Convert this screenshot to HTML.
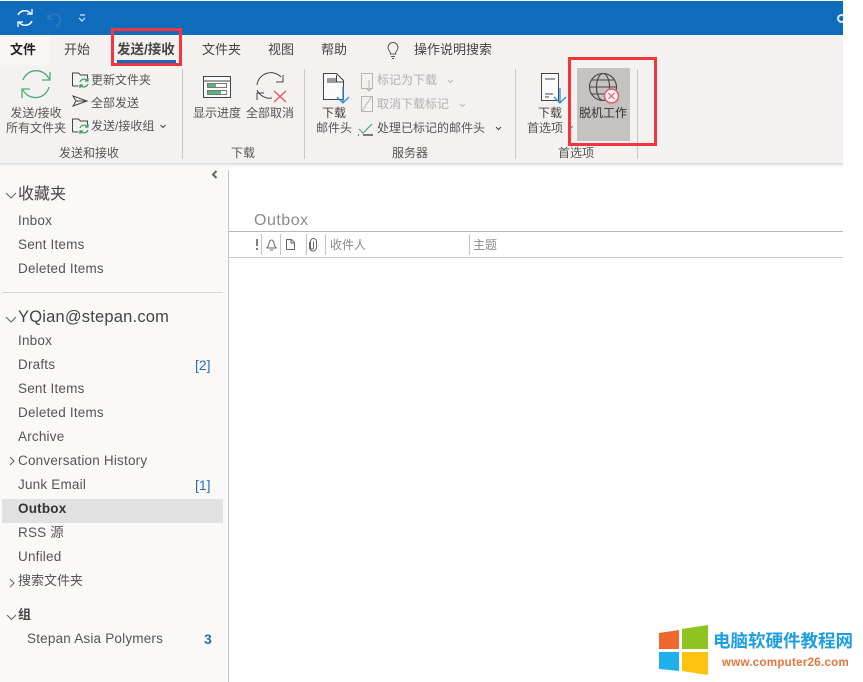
<!DOCTYPE html>
<html><head><meta charset="utf-8"><style>
html,body{margin:0;padding:0;background:#fff}
#p{position:relative;width:863px;height:682px;overflow:hidden;background:#fff;font-family:"Liberation Sans","Noto Sans CJK SC",sans-serif;color:#444}
.t{position:absolute;white-space:nowrap;font-size:12px;line-height:16px;color:#444}
.c{transform:translateX(-50%)}
.r{position:absolute}
.n{font-size:13.5px;letter-spacing:.2px;color:#555}
svg{position:absolute;overflow:visible}
</style></head><body><div id="p">
<div class="r" style="left:0;top:1px;width:843px;height:34px;background:#0f6cbd"></div>
<div class="r" style="left:0;top:35px;width:843px;height:128px;background:#f3f2f1"></div>
<div class="r" style="left:0;top:163px;width:843px;height:5px;background:linear-gradient(#d8d8d8,#f4f4f4 50%,#fff)"></div>
<div class="r" style="left:0;top:166px;width:228px;height:516px;background:#faf9f8"></div>
<div class="r" style="left:228px;top:170px;width:1px;height:512px;background:#c8c8c8"></div>
<div class="r" style="left:0;top:35px;width:50px;height:30px;background:#f7f6f5"></div>

<svg style="left:0;top:0" width="120" height="35" fill="none">
<path d="M18 15a7.500 7.500 0 0 1 13-1M32 21a7.500 7.500 0 0 1-13 1" stroke="#fff" stroke-width="1.500"/>
<path d="M32 9v5h-5M18 27v-5h5" stroke="#fff" stroke-width="1.300"/>
<path d="M48 14v5h5M48 19c3-6 10-6 12-1 1 4-1 7-4 9" stroke="#2f78bd" stroke-width="1.400"/>
<path d="M80 15h5M79 18l3 3 3-3" stroke="#dce9f6" stroke-width="1.200"/>
</svg>
<div class="r" style="left:837px;top:13px;width:6px;height:11px;overflow:hidden"><div style="width:9px;height:9px;border:2px solid #dfeaf5;border-radius:50%;box-sizing:border-box;margin-top:1px"></div></div>

<div class="t" style="left:10px;top:42px;font-weight:700;color:#222;font-size:13px">文件</div>
<div class="t" style="left:64px;top:42px;font-size:13px">开始</div>
<div class="t" style="left:117px;top:42px;font-weight:700;font-size:13.500px;color:#444">发送/接收</div>
<div class="r" style="left:117px;top:60px;width:59px;height:3px;background:#0f6cbd"></div>
<div class="t" style="left:202px;top:42px;font-size:13px">文件夹</div>
<div class="t" style="left:268px;top:42px;font-size:13px">视图</div>
<div class="t" style="left:321px;top:42px;font-size:13px">帮助</div>
<svg style="left:385px;top:42px" width="16" height="18" fill="none" stroke="#555"><path d="M5.500 12c0-3-2.500-3.500-2.500-6.500a5 5 0 0 1 10 0c0 3-2.500 3.500-2.500 6.500zM6 14.500h4M7 16.500h2"/></svg>
<div class="t" style="left:414px;top:42px;font-size:13px">操作说明搜索</div>

<svg style="left:0;top:66px" width="170" height="70" fill="none">
<path d="M23 14a14 14 0 0 1 26-1M49 21a14 14 0 0 1-26 3" stroke="#4aab72" stroke-width="1.300"/>
<path d="M50 6v8h-8M22 32v-9h8" stroke="#4aab72" stroke-width="1.300"/>
<path d="M72.500 20V7h6l2 2h7v4M72.500 20h6" stroke="#444"/>
<path d="M80 16a4.500 4.500 0 0 1 7.500-1.500M88 18a4.500 4.500 0 0 1-7.500 1.500M88 12v3h-3M80 22v-3h3" stroke="#3a9a5e" stroke-width="1.200"/>
<path d="M73 30l14 5-14 5 3-5zM76 35h11" stroke="#444"/>
<path d="M72.500 66V53h6l2 2h7v4M72.500 66h6" stroke="#444"/>
<path d="M80 62a4.500 4.500 0 0 1 7.500-1.500M88 64a4.500 4.500 0 0 1-7.500 1.500M88 58v3h-3M80 68v-3h3" stroke="#3a9a5e" stroke-width="1.200"/>
<path d="M160.500 59l2.500 2.500 2.500-2.500" stroke="#444"/>
</svg>
<div class="t c" style="left:36px;top:105px;color:#555">发送/接收</div>
<div class="t c" style="left:36px;top:120px;color:#555">所有文件夹</div>
<div class="t" style="left:91px;top:72px;color:#555">更新文件夹</div>
<div class="t" style="left:91px;top:95px;color:#555">全部发送</div>
<div class="t" style="left:91px;top:118px;color:#555">发送/接收组</div>
<div class="t c" style="left:89px;top:145px;color:#555">发送和接收</div>
<div class="r" style="left:182px;top:69px;width:1px;height:90px;background:#c9c8c7"></div>

<svg style="left:190px;top:70px" width="110" height="36" fill="none">
<rect x="13.500" y="6.500" width="27" height="21" fill="#fafafa" stroke="#444"/><path d="M14 11h26" stroke="#444"/>
<rect x="17.500" y="13.500" width="19" height="4" fill="#fff" stroke="#777"/><rect x="18" y="14" width="8" height="3" fill="#59b27d"/>
<rect x="17.500" y="20.500" width="19" height="4" fill="#fff" stroke="#777"/><rect x="18" y="21" width="13" height="3" fill="#59b27d"/>
<path d="M67 15a14 14 0 0 1 24-8M82 28a14 14 0 0 1-15-8" stroke="#444"/>
<path d="M93 5v7h-7M67 30v-7h7" stroke="#444"/>
<path d="M84 21l12 11M96 21L84 32" stroke="#e8504f" stroke-width="1.200"/>
</svg>
<div class="t c" style="left:217px;top:105px;color:#555">显示进度</div>
<div class="t c" style="left:270px;top:105px;color:#555">全部取消</div>
<div class="t c" style="left:243px;top:145px;color:#555">下载</div>
<div class="r" style="left:304px;top:69px;width:1px;height:90px;background:#c9c8c7"></div>

<svg style="left:318px;top:70px" width="50" height="36" fill="none">
<path d="M5.500 3.500h13l7 7v19h-20z" fill="#fbfbfb" stroke="#444"/><path d="M18.500 5v7h7" stroke="#444"/><rect x="9" y="8" width="9" height="5" fill="#999"/>
<path d="M25 17v16M19 27l6 6 6-6" stroke="#2f8fd0" stroke-width="1.300"/>
</svg>
<div class="t c" style="left:334px;top:105px;color:#444">下载</div>
<div class="t c" style="left:334px;top:120px;color:#555">邮件头</div>
<svg style="left:355px;top:70px" width="130" height="70" fill="none">
<path d="M6.500 3.500h11v15h-11z" stroke="#b5b5b5"/><path d="M14 10v11M10.500 18l3.500 3 3.500-3" stroke="#b5b5b5"/>
<path d="M6.500 26.500h11v15h-11zM7 41l10-15" stroke="#b5b5b5"/>
<path d="M4 59l4 4 9-9" stroke="#4aab72" stroke-width="1.200"/><path d="M3 65h1M8 65h10" stroke="#333" stroke-width="1.200"/>
<path d="M93 10l2.500 2.500 2.500-2.500M105 34l2.500 2.500 2.500-2.500" stroke="#bbb"/>
</svg>
<div class="t" style="left:377px;top:72px;color:#b0b0b0">标记为下载</div>
<div class="t" style="left:377px;top:96px;color:#b0b0b0">取消下载标记</div>
<div class="t" style="left:377px;top:120px;color:#555">处理已标记的邮件头</div>
<svg style="left:495px;top:126px" width="12" height="8" fill="none"><path d="M1 1l2.500 2.500L6 1" stroke="#444"/></svg>
<div class="t c" style="left:410px;top:145px;color:#555">服务器</div>
<div class="r" style="left:515px;top:69px;width:1px;height:90px;background:#c9c8c7"></div>

<svg style="left:536px;top:70px" width="32" height="36" fill="none">
<path d="M5.500 3.500h17v27h-17z" fill="#fbfbfb" stroke="#444"/><path d="M9 9h10M9 24h8M9 27h4" stroke="#444"/>
<path d="M24 18v15M18 27l6 6 6-6" stroke="#2f8fd0" stroke-width="1.300"/>
</svg>
<div class="t c" style="left:550px;top:105px;color:#444">下载</div>
<div class="t c" style="left:545px;top:120px;color:#555">首选项</div>
<svg style="left:568px;top:125px" width="8" height="6" fill="none"><path d="M1 1l2 2 2-2" stroke="#777"/></svg>
<div class="t c" style="left:576px;top:145px;color:#555">首选项</div>

<div class="r" style="left:577px;top:68px;width:53px;height:73px;background:#c4c3c1"></div>
<svg style="left:585px;top:70px" width="40" height="36" fill="none">
<circle cx="18" cy="17" r="13.500" stroke="#444" stroke-width="1.100"/><ellipse cx="18" cy="17" rx="6.500" ry="13.500" stroke="#444" stroke-width="1.100"/><path d="M5 17h27M7 10h22M7 24h22" stroke="#444" stroke-width="1.100"/>
<circle cx="26.500" cy="26" r="7" fill="#f6f2f2" stroke="#ea5a66" stroke-width="1.500"/><path d="M23.500 23l6 6M29.500 23l-6 6" stroke="#ea5a66" stroke-width="1.200"/>
</svg>
<div class="t c" style="left:603px;top:105px;color:#333">脱机工作</div>
<div class="r" style="left:637px;top:69px;width:1px;height:90px;background:#c9c8c7"></div>

<div class="r" style="box-sizing:border-box;left:111px;top:28px;width:71px;height:38px;border:3px solid #f5343c"></div>
<div class="r" style="box-sizing:border-box;left:568px;top:57px;width:89px;height:89px;border:3px solid #f5343c"></div>

<svg style="left:0;top:168px" width="228" height="470" fill="none" stroke="#666">
<path d="M216.500 3l-3.500 3.500 3.500 3.500" stroke="#666" stroke-width="2"/>
<path d="M6 25l5 5 5-5M6 149l5 5 5-5M7 447l4.500 4.500 4.500-4.500" stroke-width="1.100"/>
<path d="M10 289l4 4-4 4M10 411l4 4-4 4" stroke-width="1.100"/>
</svg>
<div class="t" style="left:18px;top:185px;font-size:16px;line-height:20px;color:#444">收藏夹</div>
<div class="t n" style="left:18px;top:213px">Inbox</div>
<div class="t n" style="left:18px;top:237px">Sent Items</div>
<div class="t n" style="left:18px;top:261px">Deleted Items</div>
<div class="r" style="left:2px;top:292px;width:221px;height:1px;background:#d6d5d4"></div>
<div class="t" style="left:18px;top:307px;font-size:16.500px;line-height:21px;color:#444;letter-spacing:.2px">YQian@stepan.com</div>
<div class="t n" style="left:18px;top:333px">Inbox</div>
<div class="t n" style="left:18px;top:357px">Drafts</div>
<div class="t" style="left:195px;top:357px;font-size:14px;color:#2a6db5">[2]</div>
<div class="t n" style="left:18px;top:381px">Sent Items</div>
<div class="t n" style="left:18px;top:405px">Deleted Items</div>
<div class="t n" style="left:18px;top:429px">Archive</div>
<div class="t n" style="left:18px;top:453px">Conversation History</div>
<div class="t n" style="left:18px;top:477px">Junk Email</div>
<div class="t" style="left:195px;top:477px;font-size:14px;color:#2a6db5">[1]</div>
<div class="r" style="left:2px;top:499px;width:221px;height:24px;background:#e1e1e1"></div>
<div class="t n" style="left:18px;top:501px;font-weight:700;color:#333">Outbox</div>
<div class="t n" style="left:18px;top:525px">RSS 源</div>
<div class="t n" style="left:18px;top:549px">Unfiled</div>
<div class="t" style="left:18px;top:573px;font-size:13px;color:#555">搜索文件夹</div>
<div class="t" style="left:18px;top:607px;font-size:13px;font-weight:700;color:#444">组</div>
<div class="t n" style="left:27px;top:631px">Stepan Asia Polymers</div>
<div class="t" style="left:204px;top:631px;font-size:14px;font-weight:700;color:#2a6db5">3</div>

<div class="t" style="left:254px;top:211px;font-size:16px;line-height:19px;color:#8a8a8a;letter-spacing:.5px">Outbox</div>
<div class="r" style="left:229px;top:231px;width:614px;height:1px;background:#b9b9b9"></div>
<div class="r" style="left:229px;top:257px;width:614px;height:1px;background:#c9c9c9"></div>
<div class="r" style="left:261px;top:234px;width:1px;height:21px;background:#c4c4c4"></div>
<div class="r" style="left:280px;top:234px;width:1px;height:21px;background:#c4c4c4"></div>
<div class="r" style="left:306px;top:234px;width:1px;height:21px;background:#c4c4c4"></div>
<div class="r" style="left:325px;top:234px;width:1px;height:21px;background:#c4c4c4"></div>
<div class="r" style="left:469px;top:234px;width:1px;height:21px;background:#c4c4c4"></div>
<svg style="left:229px;top:232px" width="100" height="24" fill="none" stroke="#666">
<path d="M28 7v7M28 16v2" stroke="#555" stroke-width="1.500"/>
<path d="M37.500 16c2-1 2-3 2.500-5 .5-2 1.500-3 2.500-3s2 1 2.500 3c.5 2 .5 4 2.500 5zM41 18h3"/>
<path d="M57.500 7.500h5l3 3v7h-8zM62 8v3h3"/>
<path d="M80.500 10v5.500a3.500 3.500 0 0 0 7 0v-6a3 3 0 0 0-6 0v6a1.500 1.500 0 0 0 3 0v-6"/>
</svg>
<div class="t" style="left:330px;top:237px;color:#888">收件人</div>
<div class="t" style="left:473px;top:237px;color:#888">主题</div>

<svg style="left:0;top:0" width="863" height="682">
<path d="M659 633l20-3v19h-20z" fill="#f1662f"/><path d="M682 629l26-4v24h-26z" fill="#8fc31f"/>
<path d="M659 652h20v19l-20-2z" fill="#1fb0ec"/><path d="M682 652h26v23l-26-4z" fill="#ffc20e"/>
</svg>
<div class="t" style="left:713px;top:630px;font-size:17.500px;line-height:22px;font-weight:700;color:#1d9ee0">电脑软硬件教程网</div>
<div class="t" style="left:722px;top:656px;font-size:11.500px;line-height:14px;font-weight:700;color:#e8743b;letter-spacing:.3px">www.computer26.com</div>
</div></body></html>
